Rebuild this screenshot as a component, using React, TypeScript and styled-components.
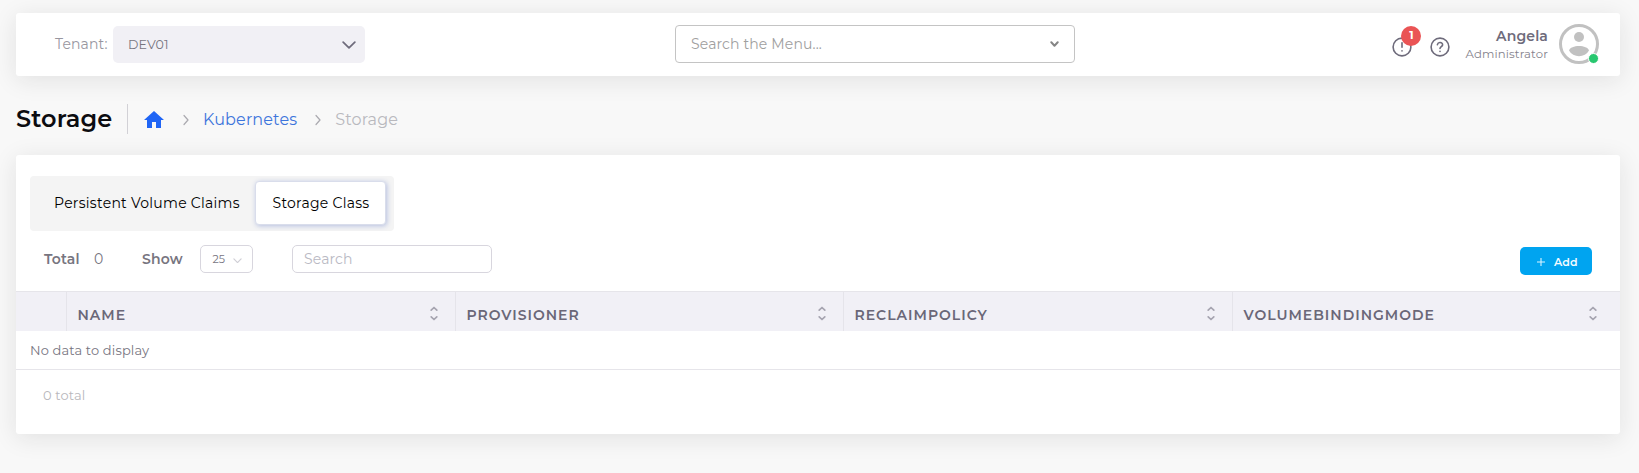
import React from "react";
import styled, { createGlobalStyle } from "styled-components";

const GlobalStyle = createGlobalStyle`
  * { box-sizing: border-box; }
  body {
    margin: 0;
    background: #f8f8f8;
    color: #6e6b7b;
    font-family: Montserrat, Inter, sans-serif;
    font-size: 14px;
  }
  button, input { font-family: inherit; }
  svg { display: block; flex: none; }
`;

const Page = styled.div`
  min-height: 473px;
  padding: 13px 19px 39px 16px;
`;

const Panel = styled.section`
  background: #fff;
  border-radius: 3px;
  box-shadow: 0 4px 24px rgba(34, 34, 34, 0.1);
`;

const Label = styled.span<{ $spacing?: number; $size?: number; $weight?: number; $color?: string }>`
  white-space: nowrap;
  line-height: 20px;
  font-size: ${(p) => p.$size ?? 14}px;
  font-weight: ${(p) => p.$weight ?? 400};
  letter-spacing: ${(p) => p.$spacing ?? 0.14}px;
  color: ${(p) => p.$color ?? "#77757f"};
`;

const TopBar = styled(Panel)`
  display: flex;
  align-items: flex-start;
  height: 63px;
  padding: 11px 21px 0 39px;
`;

const Tenant = styled.div`
  display: flex;
  align-items: center;
  justify-content: space-between;
  width: 310px;
  margin-top: 2px;
  > :first-child { margin-top: -2px; }
`;

const TenantSelect = styled.div`
  display: flex;
  align-items: center;
  justify-content: space-between;
  width: 252px;
  height: 37px;
  padding: 0 9px 0 15px;
  border-radius: 5px;
  background: #f1f0f5;
`;

const MenuSearch = styled.div`
  display: flex;
  align-items: center;
  justify-content: space-between;
  width: 400px;
  height: 38px;
  margin: 1px 0 0 310px;
  padding: 0 15px;
  border: 1px solid #c4c4c4;
  border-radius: 4px;
`;

const UserArea = styled.div`
  display: flex;
  align-items: center;
  height: 40px;
  margin-left: auto;
`;

const Alert = styled.div`
  position: relative;
  margin: 5px 18px 0 0;
`;

const AlertBadge = styled.span`
  position: absolute;
  left: 9px;
  top: -11px;
  width: 20px;
  height: 20px;
  border-radius: 50%;
  background: #ea5455;
  color: #fff;
  font-size: 11px;
  font-weight: 700;
  line-height: 18px;
  text-align: center;
`;

const HelpButton = styled.div`
  margin: 5px 15px 0 0;
`;

const UserName = styled.div`
  display: flex;
  flex-direction: column;
  align-items: flex-end;
  margin: 1px 11px 0 0;
  > * { line-height: 18px; }
`;

const Avatar = styled.div`
  position: relative;
`;

const Online = styled.span`
  position: absolute;
  right: 0;
  bottom: 0;
  width: 11px;
  height: 11px;
  border: 1px solid #fff;
  border-radius: 50%;
  background: #28c76f;
`;

const Heading = styled.header`
  display: flex;
  align-items: center;
  height: 30px;
  margin: 28px 0 21px;
`;

const Title = styled.h1`
  width: 112px;
  height: 30px;
  margin: 0 16px 0 0;
  border-right: 1px solid #d2d1d6;
  color: #0c0c10;
  font-size: 24px;
  font-weight: 600;
  line-height: 29px;
  letter-spacing: 0.1px;
`;

const Crumbs = styled.nav`
  display: flex;
  align-items: center;
  margin-top: 1px;
  > :nth-child(2) { margin: 0 14px 0 19px; }
  > :nth-child(4) { margin: 0 14px 0 18px; }
`;

const Content = styled(Panel)`
  height: 279px;
  padding-top: 21px;
`;

const Tabs = styled.div`
  display: flex;
  width: 364px;
  height: 55px;
  margin-left: 14px;
  padding: 5px 8px 6px 9px;
  border-radius: 4px;
  background: #f4f4f4;
`;

const Tab = styled.button<{ $active?: boolean }>`
  flex: ${(p) => (p.$active ? "0 0 131px" : "1 1 auto")};
  padding: 0 0 0 ${(p) => (p.$active ? 16.5 : 14)}px;
  border: 1px solid ${(p) => (p.$active ? "#d9ddeb" : "transparent")};
  border-radius: 4px;
  background: ${(p) => (p.$active ? "#fff" : "transparent")};
  box-shadow: ${(p) => (p.$active ? "1px 1px 5px #b5bfe0" : "none")};
  text-align: left;
`;

const Toolbar = styled.div`
  display: flex;
  align-items: center;
  height: 60px;
  padding: 0 28px 4px;
`;

const Total = styled.div`
  display: flex;
  gap: 14.5px;
  width: 98px;
`;

const ShowLabel = styled.div`
  display: flex;
  width: 58px;
`;

const PageSize = styled.div`
  display: flex;
  align-items: center;
  justify-content: space-between;
  width: 53px;
  height: 28px;
  margin-right: 39px;
  padding: 0 10px 0 11.5px;
  border: 1px solid #d8d6de;
  border-radius: 5px;
  svg { margin-top: 3px; }
`;

const SearchInput = styled.input`
  width: 200px;
  height: 28px;
  padding: 0 11px;
  border: 1px solid #d8d6de;
  border-radius: 5px;
  outline: none;
  font-size: 14px;
  letter-spacing: 0.14px;
  &::placeholder { color: #b9b9c3; opacity: 1; }
`;

const AddButton = styled.button`
  display: flex;
  align-items: center;
  gap: 9px;
  width: 72px;
  height: 28px;
  margin: 4px 0 0 auto;
  padding: 1px 0 0 17px;
  border: 0;
  border-radius: 5px;
  background: #00a4f0;
`;

const TableHead = styled.div`
  display: grid;
  grid-template-columns: 50px 389px 388px 389px 1fr;
  height: 40px;
  border-top: 1px solid #e6e5ea;
  background: #f1f0f6;
`;

const HeadCell = styled.div`
  display: flex;
  align-items: center;
  justify-content: space-between;
  padding: 7px 17px 0 10.5px;
  border-left: 1px solid #e5e4ea;
  &:first-child { border-left: 0; }
  &:last-child { padding-right: 23px; }
  svg { margin-top: -3px; }
`;

const EmptyRow = styled.div`
  display: flex;
  align-items: center;
  height: 39px;
  padding-left: 14px;
  border-bottom: 1px solid #e6e5ea;
`;

const TableFoot = styled.div`
  padding: 15px 27px;
`;

function Chevron({ w, h, color, stroke }: { w: number; h: number; color: string; stroke: number }) {
  const pad = stroke / 2 + 0.3;
  return (
    <svg width={w} height={h} fill="none" stroke={color} strokeWidth={stroke} strokeLinecap="round" strokeLinejoin="round">
      <path d={`M${pad} ${pad} L${w / 2} ${h - pad} L${w - pad} ${pad}`} />
    </svg>
  );
}

function CrumbArrow() {
  return (
    <svg width="6" height="12" fill="none" stroke="#aaa9af" strokeWidth="1.2" strokeLinecap="round" strokeLinejoin="round">
      <path d="M1 1.5 L5 6 L1 10.5" />
    </svg>
  );
}

function SortIcon() {
  return (
    <svg width="8" height="15" fill="none" stroke="#a6a4b0" strokeWidth="1.7" strokeLinecap="round" strokeLinejoin="round">
      <path d="M1.2 4.2 L4 1.5 L6.8 4.2 M1.2 10.8 L4 13.5 L6.8 10.8" />
    </svg>
  );
}

const columns = ["NAME", "PROVISIONER", "RECLAIMPOLICY", "VOLUMEBINDINGMODE"];

export default function App() {
  return (
    <Page>
      <GlobalStyle />
      <TopBar>
        <Tenant>
          <Label $color="#98969f">Tenant:</Label>
          <TenantSelect>
            <Label $size={12.6} $spacing={0.1}>DEV01</Label>
            <Chevron w={14} h={8} color="#6e6b7b" stroke={1.7} />
          </TenantSelect>
        </Tenant>
        <MenuSearch>
          <Label $color="#a0a0a0">Search the Menu...</Label>
          <Chevron w={9} h={6} color="#858585" stroke={2} />
        </MenuSearch>
        <UserArea>
          <Alert>
            <svg width="20" height="20" fill="none" stroke="#6e6b7b" strokeWidth="1.6" strokeLinecap="round">
              <circle cx="10" cy="10" r="8.9" />
              <path d="M10 5.8 V10.3 M10 13.7 V13.9" />
            </svg>
            <AlertBadge>1</AlertBadge>
          </Alert>
          <HelpButton>
            <svg width="20" height="20" fill="none" stroke="#6e6b7b" strokeWidth="1.6" strokeLinecap="round" strokeLinejoin="round">
              <circle cx="10" cy="10" r="8.9" />
              <path d="M7.4 7.6 C7.8 5.9 9 5.4 10.2 5.5 C11.7 5.6 12.7 6.6 12.6 7.9 C12.5 9.6 10.1 9.8 10 11.5 M10 14.2 V14.4" />
            </svg>
          </HelpButton>
          <UserName>
            <Label $weight={600} $color="#6e6b7b">Angela</Label>
            <Label $size={11.67} $color="#84828c">Administrator</Label>
          </UserName>
          <Avatar>
            <svg width="40" height="40">
              <circle cx="20" cy="20" r="18.5" fill="#fff" stroke="#c1c1c1" strokeWidth="3" />
              <circle cx="20" cy="13" r="5" fill="#c1c1c1" />
              <path d="M10 26.5 C11.5 20.5 28.5 20.5 30 26.5 C26 34 14 34 10 26.5 Z" fill="#c1c1c1" />
            </svg>
            <Online />
          </Avatar>
        </UserArea>
      </TopBar>

      <Heading>
        <Title>Storage</Title>
        <Crumbs>
          <svg width="20" height="17" viewBox="0 0 20 17" fill="#2065f5">
            <path d="M8 17 V11 H12 V17 H17 V9 H20 L10 0 L0 9 H3 V17 Z" />
          </svg>
          <CrumbArrow />
          <Label $size={16} $color="#3d75dc">Kubernetes</Label>
          <CrumbArrow />
          <Label $size={16} $color="#b9b9be">Storage</Label>
        </Crumbs>
      </Heading>

      <Content>
        <Tabs>
          <Tab><Label $spacing={0.27} $color="#000">Persistent Volume Claims</Label></Tab>
          <Tab $active><Label $spacing={0.27} $color="#000">Storage Class</Label></Tab>
        </Tabs>
        <Toolbar>
          <Total>
            <Label $weight={600}>Total</Label>
            <Label>0</Label>
          </Total>
          <ShowLabel><Label $weight={600}>Show</Label></ShowLabel>
          <PageSize>
            <Label $size={11} $spacing={0}>25</Label>
            <Chevron w={9} h={5.5} color="#d0cfd6" stroke={1.2} />
          </PageSize>
          <SearchInput placeholder="Search" />
          <AddButton>
            <svg width="8" height="8" stroke="#d9f3ff" strokeWidth="1.1">
              <path d="M4 0 V8 M0 4 H8" />
            </svg>
            <Label $size={11} $weight={600} $color="#f4fbff">Add</Label>
          </AddButton>
        </Toolbar>
        <TableHead>
          <HeadCell />
          {columns.map((name) => (
            <HeadCell key={name}>
              <Label $weight={600} $spacing={1} $color="#6a6778">{name}</Label>
              <SortIcon />
            </HeadCell>
          ))}
        </TableHead>
        <EmptyRow><Label $size={13}>No data to display</Label></EmptyRow>
        <TableFoot><Label $size={13} $color="#b8b7bc">0 total</Label></TableFoot>
      </Content>
    </Page>
  );
}
